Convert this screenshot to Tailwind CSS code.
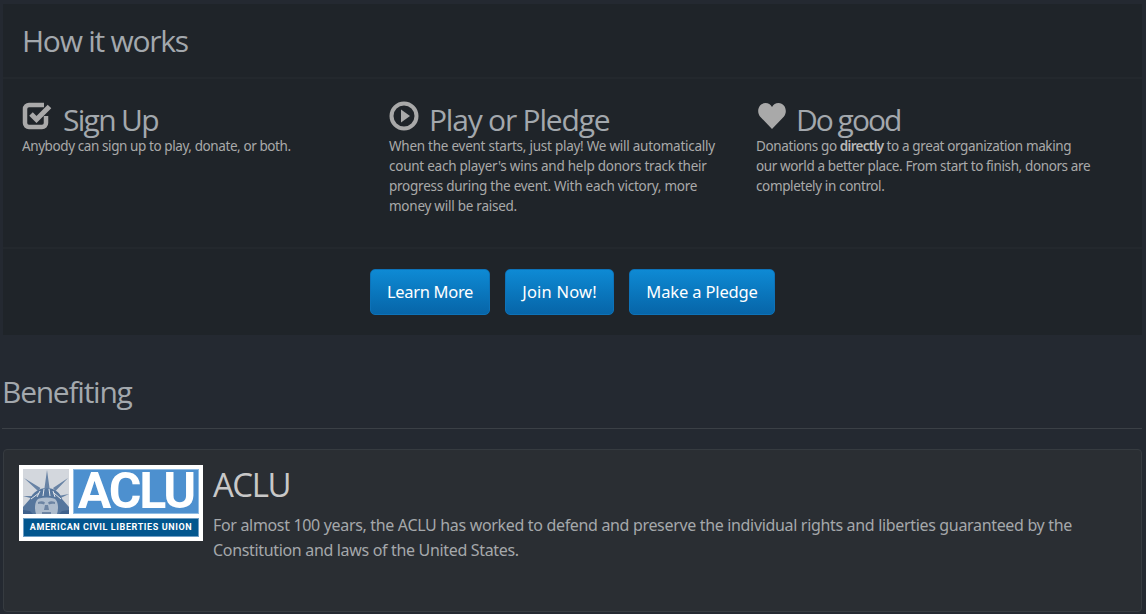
<!DOCTYPE html>
<html><head><meta charset="utf-8"><script src="https://cdn.jsdelivr.net/npm/@tailwindcss/browser@4"></script></head>
<body class="bg-[#242931] w-[1146px] h-[614px] overflow-hidden font-['Noto_Sans',sans-serif] text-[#aaaaaa]">
<div class="ml-[3px] mr-[4px] pt-[4px]">
 <section class="bg-[#1f2429] h-[331px] flex flex-col">
  <div class="h-[75px] border-b-[2px] border-[#23282d] pl-[19px] pt-[18px]">
   <h2 class="text-[30px] leading-[38px] text-[#a3a8ad] font-['Open_Sans',sans-serif] tracking-[-1.25px]">How it works</h2>
  </div>
  <div class="h-[170px] border-b-[2px] border-[#23282d] flex pl-[19px] pt-[23px]">
   <div class="w-[367px]">
    <div class="flex items-center h-[36px] gap-[10px]">
     <svg class="w-[31px] h-[30px] -mt-[8px]" viewBox="0 0 31 30"><path d="M24 15v7a4 4 0 0 1-4 4H7a4 4 0 0 1-4-4V8a4 4 0 0 1 4-4h15" fill="none" stroke="#a9a9a9" stroke-width="4.500"/><path d="M9 13l5.500 5.500L27.500 5.500" fill="none" stroke="#a9a9a9" stroke-width="5"/></svg>
     <span class="text-[30px] text-[#a3a8ad] font-['Open_Sans',sans-serif] tracking-[-1.7px] leading-[36px]">Sign Up</span>
    </div>
    <p class="text-[13.5px] leading-[20px] -mt-[2px] w-[340px] tracking-[-0.41px]">Anybody can sign up to play, donate, or both.</p>
   </div>
   <div class="w-[367px]">
    <div class="flex items-center h-[36px] gap-[10px]">
     <svg class="w-[30px] h-[30px] -mt-[8px]" viewBox="0 0 30 30"><circle cx="15" cy="15" r="12.500" fill="none" stroke="#a9a9a9" stroke-width="4"/><path d="M12 8.500L21 15l-9 6.500z" fill="#a9a9a9"/></svg>
     <span class="text-[30px] text-[#a3a8ad] font-['Open_Sans',sans-serif] tracking-[-1.2px] leading-[36px]">Play or Pledge</span>
    </div>
    <p class="text-[13.5px] leading-[20px] -mt-[2px] w-[345px] tracking-[-0.25px] whitespace-nowrap">When the event starts, just play! We will automatically<br>count each player's wins and help donors track their<br>progress during the event. With each victory, more<br>money will be raised.</p>
   </div>
   <div class="w-[345px]">
    <div class="flex items-center h-[36px] gap-[10px]">
     <svg class="w-[30px] h-[30px] -mt-[8px] ml-[1px] -mr-[1px]" viewBox="0 0 30 30"><path d="M15 28L3 15.500C-1 10 2 2 8.500 2c3 0 5 1.500 6.500 4 1.500-2.500 3.500-4 6.500-4C28 2 31 10 27 15.500z" fill="#a9a9a9"/></svg>
     <span class="text-[30px] text-[#a3a8ad] font-['Open_Sans',sans-serif] tracking-[-2px] leading-[36px]">Do good</span>
    </div>
    <p class="text-[13.5px] leading-[20px] -mt-[2px] tracking-[-0.38px] whitespace-nowrap">Donations go <b class="text-[#b8b8b8] font-semibold tracking-[-0.7px]">directly</b> to a great organization making<br>our world a better place. From start to finish, donors are<br>completely in control.</p>
   </div>
  </div>
  <div class="flex justify-center gap-[15px] pt-[20px]">
   <a class="h-[46px] w-[120px] flex items-center justify-center rounded-[5px] border border-[#0d72b8] bg-gradient-to-b from-[#0e8ad4] to-[#0765a8] text-white text-[16.500px] tracking-[-0.3px]">Learn More</a>
   <a class="h-[46px] w-[109px] flex items-center justify-center rounded-[5px] border border-[#0d72b8] bg-gradient-to-b from-[#0e8ad4] to-[#0765a8] text-white text-[16.500px] tracking-[0.2px]">Join Now!</a>
   <a class="h-[46px] w-[146px] flex items-center justify-center rounded-[5px] border border-[#0d72b8] bg-gradient-to-b from-[#0e8ad4] to-[#0765a8] text-white text-[16.500px] tracking-[-0.15px]">Make a Pledge</a>
  </div>
 </section>
 <h2 class="mt-[37px] h-[57px] border-b border-[#3b4046] text-[30px] leading-[40px] text-[#a3a8ad] font-['Open_Sans',sans-serif] tracking-[-1.25px] -ml-[1px]">Benefiting</h2>
 <section class="mt-[20px] h-[163px] bg-[#2a2e33] border border-[#363b40] rounded-[4px] flex pl-[15px] pt-[15px]">
  <div class="w-[184px] h-[76px] bg-white p-[4px] flex flex-col gap-[4px] shrink-0">
   <div class="flex gap-[4px] h-[45px]">
    <svg class="w-[46px] h-[45px] bg-[#d3d7dd]" viewBox="0 0 46 45">
     <path d="M24 1l-2.500 18h5zM1 9l14 13 2.500-3zM45 9L30 19l2.500 3zM0 27l11 3 .5-3zM46 25l-11 2 .5 3z" fill="#6883a5"/>
     <path d="M0 38l7-8c3-7 9-11 17-11 7 0 13 4 15 11l7 8v7H0z" fill="#56769d"/>
     <path d="M8 30l8-6M14 28l3-6M20 27l1-7M27 27l-1-7M32 28l-2-6M38 30l-7-6" stroke="#e3e7ec" stroke-width="1"/>
     <path d="M13 45c-2-6-1-14 3-15.500 5-1.500 10-1.500 15 0 4 1.500 5 9.500 3 15.500z" fill="#aebccd"/>
     <path d="M15 33c3-1 5-1 7 .5l-1 2c-2-1-4-1-6-.5zM32 33c-3-1-5-1-7 .5l1 2c2-1 4-1 6-.5zM22 36l-1 5h5l-1-5zM19 43h9v2h-9z" fill="#6d84a3"/>
     <path d="M0 45v-4l7 1 3 3zM46 45v-4l-7 1-3 3z" fill="#3f618c"/>
    </svg>
    <div class="flex-1 bg-[#4d90cf] border border-[#8fbce4] text-white font-['Roboto',sans-serif] font-bold text-[50px] leading-[43px] tracking-[-2.2px] text-center">ACLU</div>
   </div>
   <div class="flex-1 bg-[#02568e] border border-[#6d9dc4] text-white font-['Roboto',sans-serif] font-bold text-[9px] leading-[17px] tracking-[0.6px] text-center whitespace-nowrap">AMERICAN CIVIL LIBERTIES UNION</div>
  </div>
  <div class="pl-[10px]">
   <h3 class="text-[33px] leading-[38px] text-[#c8c8c8] font-['Open_Sans',sans-serif] font-medium tracking-[-1.5px] mt-[1px]">ACLU</h3>
   <p class="text-[16px] leading-[25px] mt-[9px] text-[#a5a8ab] tracking-[-0.33px] whitespace-nowrap">For almost 100 years, the ACLU has worked to defend and preserve the individual rights and liberties guaranteed by the<br>Constitution and laws of the United States.</p>
  </div>
 </section>
</div>
</body></html>
